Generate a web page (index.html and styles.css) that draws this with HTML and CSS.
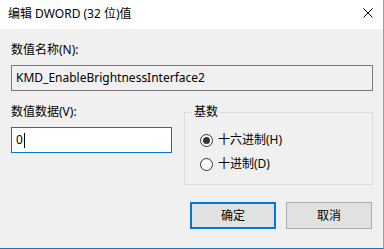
FILE: index.html
```html
<!DOCTYPE html>
<html lang="zh-CN">
<head>
<meta charset="utf-8">
<title>编辑 DWORD (32 位)值</title>
<link rel="stylesheet" href="styles.css">
</head>
<body>
<div class="window">
  <div class="titlebar">
    <span class="title">编辑 DWORD (32 位)值</span>
    <svg class="close" width="10" height="10" viewBox="0 0 10 10"><path d="M0.5 0.5 L9.5 9.5 M9.5 0.5 L0.5 9.5" stroke="#000" stroke-width="1" fill="none"/></svg>
  </div>
  <div class="content">
    <div class="label">数值名称(N):</div>
    <div class="textbox readonly">KMD_EnableBrightnessInterface2</div>
    <div class="row">
      <div class="leftcol">
        <div class="label">数值数据(V):</div>
        <div class="textbox focused">0<span class="caret"></span></div>
      </div>
      <fieldset class="group">
        <legend class="legend">基数</legend>
        <div class="radio"><span class="dot checked"></span><span>十六进制(H)</span></div>
        <div class="radio"><span class="dot"></span><span>十进制(D)</span></div>
      </fieldset>
    </div>
    <div class="buttons">
      <div class="btn default">确定</div>
      <div class="btn">取消</div>
    </div>
  </div>
</div>
</body>
</html>
```
FILE: styles.css
```css
html, body {
  margin: 0;
  padding: 0;
}
body {
  font-family: "Noto Sans", "Noto Sans CJK SC", sans-serif;
  font-size: 12px;
  line-height: 16px;
  color: #000;
}
.window {
  width: 384px;
  height: 249px;
  box-sizing: border-box;
  border-right: 1px solid #6aaae4;
  border-bottom: 1px solid #1b74c9;
  display: flex;
  flex-direction: column;
  background: #f0f0f0;
}
.titlebar {
  height: 29px;
  flex: none;
  background: #fff;
  display: flex;
  align-items: center;
  justify-content: space-between;
  padding: 0 10px 0 8px;
  box-sizing: border-box;
}
.title {
  margin-top: -2px;
}
.close {
  margin-top: -3px;
}
.content {
  flex: 1;
  padding: 13px 10px 0 11px;
  display: flex;
  flex-direction: column;
}
.label {
  height: 16px;
}
.textbox {
  margin-top: 7px;
  height: 26px;
  box-sizing: border-box;
  border: 1px solid #7a7a7a;
  padding: 0 4px;
  display: flex;
  align-items: center;
}
.textbox.readonly {
  background: #f0f0f0;
}
.textbox.focused {
  background: #fff;
  border-color: #0078d7;
}
.caret {
  display: inline-block;
  width: 1px;
  height: 15px;
  background: #000;
  margin-left: 1px;
}
.row {
  margin-top: 13px;
  display: flex;
}
.leftcol {
  width: 161px;
}
.group {
  margin: 0 0 0 12px;
  padding: 12px 0 11px 15px;
  width: 189px;
  box-sizing: border-box;
  height: 81px;
  border: 1px solid #dcdcdc;
  min-width: 0;
}
.legend {
  padding: 0 2px;
  margin-left: -8px;
  line-height: 16px;
}
.radio {
  display: flex;
  align-items: center;
  height: 16px;
  gap: 5px;
}
.radio + .radio {
  margin-top: 8px;
}
.dot {
  width: 13px;
  height: 13px;
  box-sizing: border-box;
  border: 1px solid #333;
  border-radius: 50%;
  background: #fff;
  display: flex;
  align-items: center;
  justify-content: center;
}
.dot.checked::after {
  content: "";
  width: 7px;
  height: 7px;
  border-radius: 50%;
  background: #333;
}
.buttons {
  margin-top: 17px;
  display: flex;
  justify-content: flex-end;
  gap: 10px;
  padding-right: 1px;
}
.btn {
  width: 86px;
  height: 27px;
  box-sizing: border-box;
  border: 1px solid #adadad;
  background: #e1e1e1;
  display: flex;
  align-items: center;
  justify-content: center;
}
.btn.default {
  border: 2px solid #0078d7;
}
```
